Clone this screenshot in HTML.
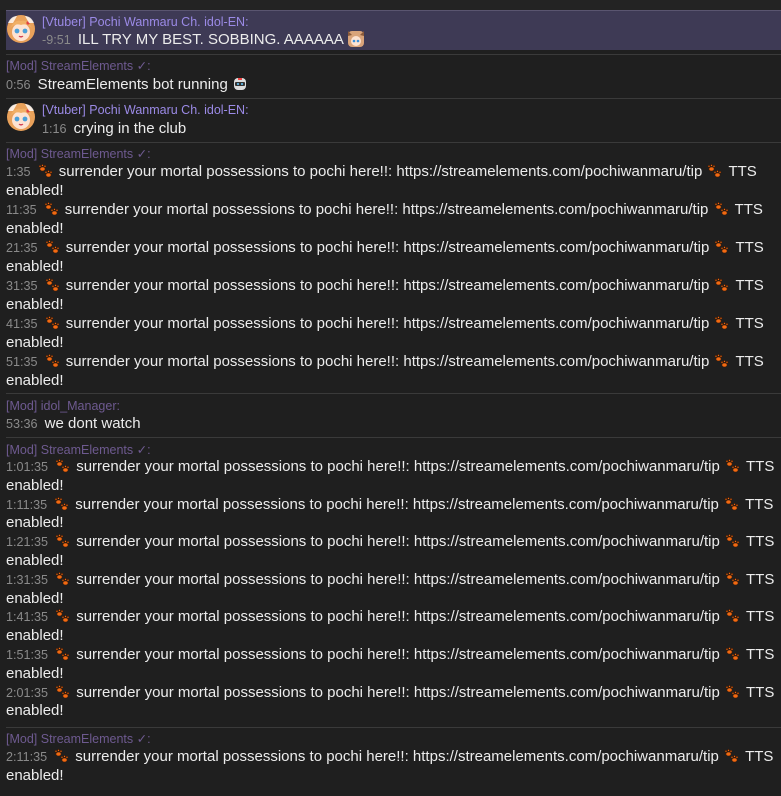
<!DOCTYPE html>
<html><head><meta charset="utf-8"><style>
html,body{margin:0;padding:0;background:#1f1f1f;width:781px;height:796px;overflow:hidden;font-family:"Liberation Sans",Arial,sans-serif}
.a{position:absolute;white-space:nowrap}
.n{font-size:12.5px;line-height:16px;color:#6e5a90}
.v{color:#9b8ae6}
.t{font-size:15px;color:#ececec}
.t div{height:19px;line-height:19px;overflow:visible}
.t.s div{height:18.8px;line-height:18.8px}
.tm{font-size:12.6px;color:#8a8a8a;margin-right:3px}
.hr{position:absolute;left:6px;right:0;height:1px;background:#3a3a3a}
.p{display:inline-block;width:16px;height:14px;vertical-align:-2px;margin-right:5px}
.p2{margin-left:1px}
.av{position:absolute;left:7px;width:28px;height:28px}
</style></head><body>
<svg width="0" height="0" style="position:absolute"><defs>
<g id="paw"><g fill="#f26a12" stroke="#3a1a08" stroke-width=".6"><ellipse cx="4.5" cy="5" rx="2.6" ry="2"/><circle cx="2" cy="2.3" r="1"/><circle cx="4.5" cy="1.4" r="1"/><circle cx="7" cy="2.3" r="1"/><ellipse cx="10.5" cy="11" rx="2.6" ry="2"/><circle cx="8" cy="8.3" r="1"/><circle cx="10.5" cy="7.4" r="1"/><circle cx="13" cy="8.3" r="1"/></g></g>
<g id="avt"><circle cx="14" cy="14" r="14" fill="#e9a15a"/><ellipse cx="14" cy="17" rx="9" ry="9" fill="#fde3d2"/><path d="M3 13 Q8 4 14 6 Q20 4 25 13 Q20 8 14 10 Q8 8 3 13Z" fill="#f1b066"/><circle cx="10" cy="16" r="2.4" fill="#4a9fd8"/><circle cx="18" cy="16" r="2.4" fill="#4a9fd8"/><path d="M12 21 Q14 23 16 21" stroke="#d04050" stroke-width="1.2" fill="#e05060"/><circle cx="21" cy="8" r="1.6" fill="#e04040"/><path d="M1 8 Q4 1 10 1 L6 8Z M27 8 Q24 1 18 1 L22 8Z" fill="#fff" opacity=".8"/></g>
</defs></svg>

<div style="position:absolute;left:0;top:0;width:781px;height:10px;background:#232323"></div>
<div style="position:absolute;left:6px;right:0;top:10px;height:39px;background:#3e3a55;border-top:1px solid #5a5570"></div>
<svg class="av" style="top:15px" viewBox="0 0 28 28"><use href="#avt"/></svg>
<div class="a n v" style="left:42px;top:14px">[Vtuber] Pochi Wanmaru Ch. idol-EN:</div>
<div class="a t" style="left:42px;top:30px"><div><span class="tm">-9:51</span> ILL TRY MY BEST. SOBBING. AAAAAA <svg width="18" height="18" viewBox="0 0 18 18" style="vertical-align:-4px"><rect x="1" y="1" width="16" height="16" rx="4" fill="#d9a47a"/><circle cx="9" cy="11" r="5" fill="#fde3d2"/><circle cx="7" cy="11" r="1.3" fill="#3a8fd8"/><circle cx="11" cy="11" r="1.3" fill="#3a8fd8"/><path d="M1 1 L5 5 L1 6Z M17 1 L13 5 L17 6Z" fill="#8a5a3a"/></svg></div></div>
<div class="hr" style="top:54px"></div>

<div class="a n" style="left:6px;top:58px">[Mod] StreamElements ✓:</div>
<div class="a t" style="left:6px;top:75px"><div><span class="tm">0:56</span> StreamElements bot running <svg width="16" height="16" viewBox="0 0 16 16" style="vertical-align:-3px"><rect x="2" y="2" width="12" height="12" rx="4" fill="#ddd"/><rect x="3" y="6" width="10" height="4" rx="1" fill="#333"/><circle cx="6" cy="8" r="1" fill="#6cf"/><circle cx="10" cy="8" r="1" fill="#6cf"/><rect x="6" y="2" width="4" height="2" fill="#e44"/></svg></div></div>
<div class="hr" style="top:98px"></div>

<svg class="av" style="top:103px" viewBox="0 0 28 28"><use href="#avt"/></svg>
<div class="a n v" style="left:42px;top:102px">[Vtuber] Pochi Wanmaru Ch. idol-EN:</div>
<div class="a t" style="left:42px;top:119px"><div><span class="tm">1:16</span> crying in the club</div></div>
<div class="hr" style="top:142px"></div>

<div class="a n" style="left:6px;top:146px">[Mod] StreamElements ✓:</div>
<div class="a t" style="left:6px;top:162px">
<div><span class="tm">1:35</span> <svg class="p" viewBox="0 0 16 14"><use href="#paw"/></svg>surrender your mortal possessions to pochi here!!: https://streamelements.com/pochiwanmaru/tip <svg class="p p2" viewBox="0 0 16 14"><use href="#paw"/></svg>TTS</div><div>enabled!</div>
<div><span class="tm">11:35</span> <svg class="p" viewBox="0 0 16 14"><use href="#paw"/></svg>surrender your mortal possessions to pochi here!!: https://streamelements.com/pochiwanmaru/tip <svg class="p p2" viewBox="0 0 16 14"><use href="#paw"/></svg>TTS</div><div>enabled!</div>
<div><span class="tm">21:35</span> <svg class="p" viewBox="0 0 16 14"><use href="#paw"/></svg>surrender your mortal possessions to pochi here!!: https://streamelements.com/pochiwanmaru/tip <svg class="p p2" viewBox="0 0 16 14"><use href="#paw"/></svg>TTS</div><div>enabled!</div>
<div><span class="tm">31:35</span> <svg class="p" viewBox="0 0 16 14"><use href="#paw"/></svg>surrender your mortal possessions to pochi here!!: https://streamelements.com/pochiwanmaru/tip <svg class="p p2" viewBox="0 0 16 14"><use href="#paw"/></svg>TTS</div><div>enabled!</div>
<div><span class="tm">41:35</span> <svg class="p" viewBox="0 0 16 14"><use href="#paw"/></svg>surrender your mortal possessions to pochi here!!: https://streamelements.com/pochiwanmaru/tip <svg class="p p2" viewBox="0 0 16 14"><use href="#paw"/></svg>TTS</div><div>enabled!</div>
<div><span class="tm">51:35</span> <svg class="p" viewBox="0 0 16 14"><use href="#paw"/></svg>surrender your mortal possessions to pochi here!!: https://streamelements.com/pochiwanmaru/tip <svg class="p p2" viewBox="0 0 16 14"><use href="#paw"/></svg>TTS</div><div>enabled!</div>
</div>
<div class="hr" style="top:393px"></div>

<div class="a n" style="left:6px;top:398px">[Mod] idol_Manager:</div>
<div class="a t" style="left:6px;top:414px"><div><span class="tm">53:36</span> we dont watch</div></div>
<div class="hr" style="top:437px"></div>

<div class="a n" style="left:6px;top:442px">[Mod] StreamElements ✓:</div>
<div class="a t s" style="left:6px;top:458px">
<div><span class="tm">1:01:35</span> <svg class="p" viewBox="0 0 16 14"><use href="#paw"/></svg>surrender your mortal possessions to pochi here!!: https://streamelements.com/pochiwanmaru/tip <svg class="p p2" viewBox="0 0 16 14"><use href="#paw"/></svg>TTS</div><div>enabled!</div>
<div><span class="tm">1:11:35</span> <svg class="p" viewBox="0 0 16 14"><use href="#paw"/></svg>surrender your mortal possessions to pochi here!!: https://streamelements.com/pochiwanmaru/tip <svg class="p p2" viewBox="0 0 16 14"><use href="#paw"/></svg>TTS</div><div>enabled!</div>
<div><span class="tm">1:21:35</span> <svg class="p" viewBox="0 0 16 14"><use href="#paw"/></svg>surrender your mortal possessions to pochi here!!: https://streamelements.com/pochiwanmaru/tip <svg class="p p2" viewBox="0 0 16 14"><use href="#paw"/></svg>TTS</div><div>enabled!</div>
<div><span class="tm">1:31:35</span> <svg class="p" viewBox="0 0 16 14"><use href="#paw"/></svg>surrender your mortal possessions to pochi here!!: https://streamelements.com/pochiwanmaru/tip <svg class="p p2" viewBox="0 0 16 14"><use href="#paw"/></svg>TTS</div><div>enabled!</div>
<div><span class="tm">1:41:35</span> <svg class="p" viewBox="0 0 16 14"><use href="#paw"/></svg>surrender your mortal possessions to pochi here!!: https://streamelements.com/pochiwanmaru/tip <svg class="p p2" viewBox="0 0 16 14"><use href="#paw"/></svg>TTS</div><div>enabled!</div>
<div><span class="tm">1:51:35</span> <svg class="p" viewBox="0 0 16 14"><use href="#paw"/></svg>surrender your mortal possessions to pochi here!!: https://streamelements.com/pochiwanmaru/tip <svg class="p p2" viewBox="0 0 16 14"><use href="#paw"/></svg>TTS</div><div>enabled!</div>
<div><span class="tm">2:01:35</span> <svg class="p" viewBox="0 0 16 14"><use href="#paw"/></svg>surrender your mortal possessions to pochi here!!: https://streamelements.com/pochiwanmaru/tip <svg class="p p2" viewBox="0 0 16 14"><use href="#paw"/></svg>TTS</div><div>enabled!</div>
</div>
<div class="hr" style="top:727px"></div>

<div class="a n" style="left:6px;top:731px">[Mod] StreamElements ✓:</div>
<div class="a t" style="left:6px;top:747px">
<div><span class="tm">2:11:35</span> <svg class="p" viewBox="0 0 16 14"><use href="#paw"/></svg>surrender your mortal possessions to pochi here!!: https://streamelements.com/pochiwanmaru/tip <svg class="p p2" viewBox="0 0 16 14"><use href="#paw"/></svg>TTS</div><div>enabled!</div>
</div>
</body></html>
